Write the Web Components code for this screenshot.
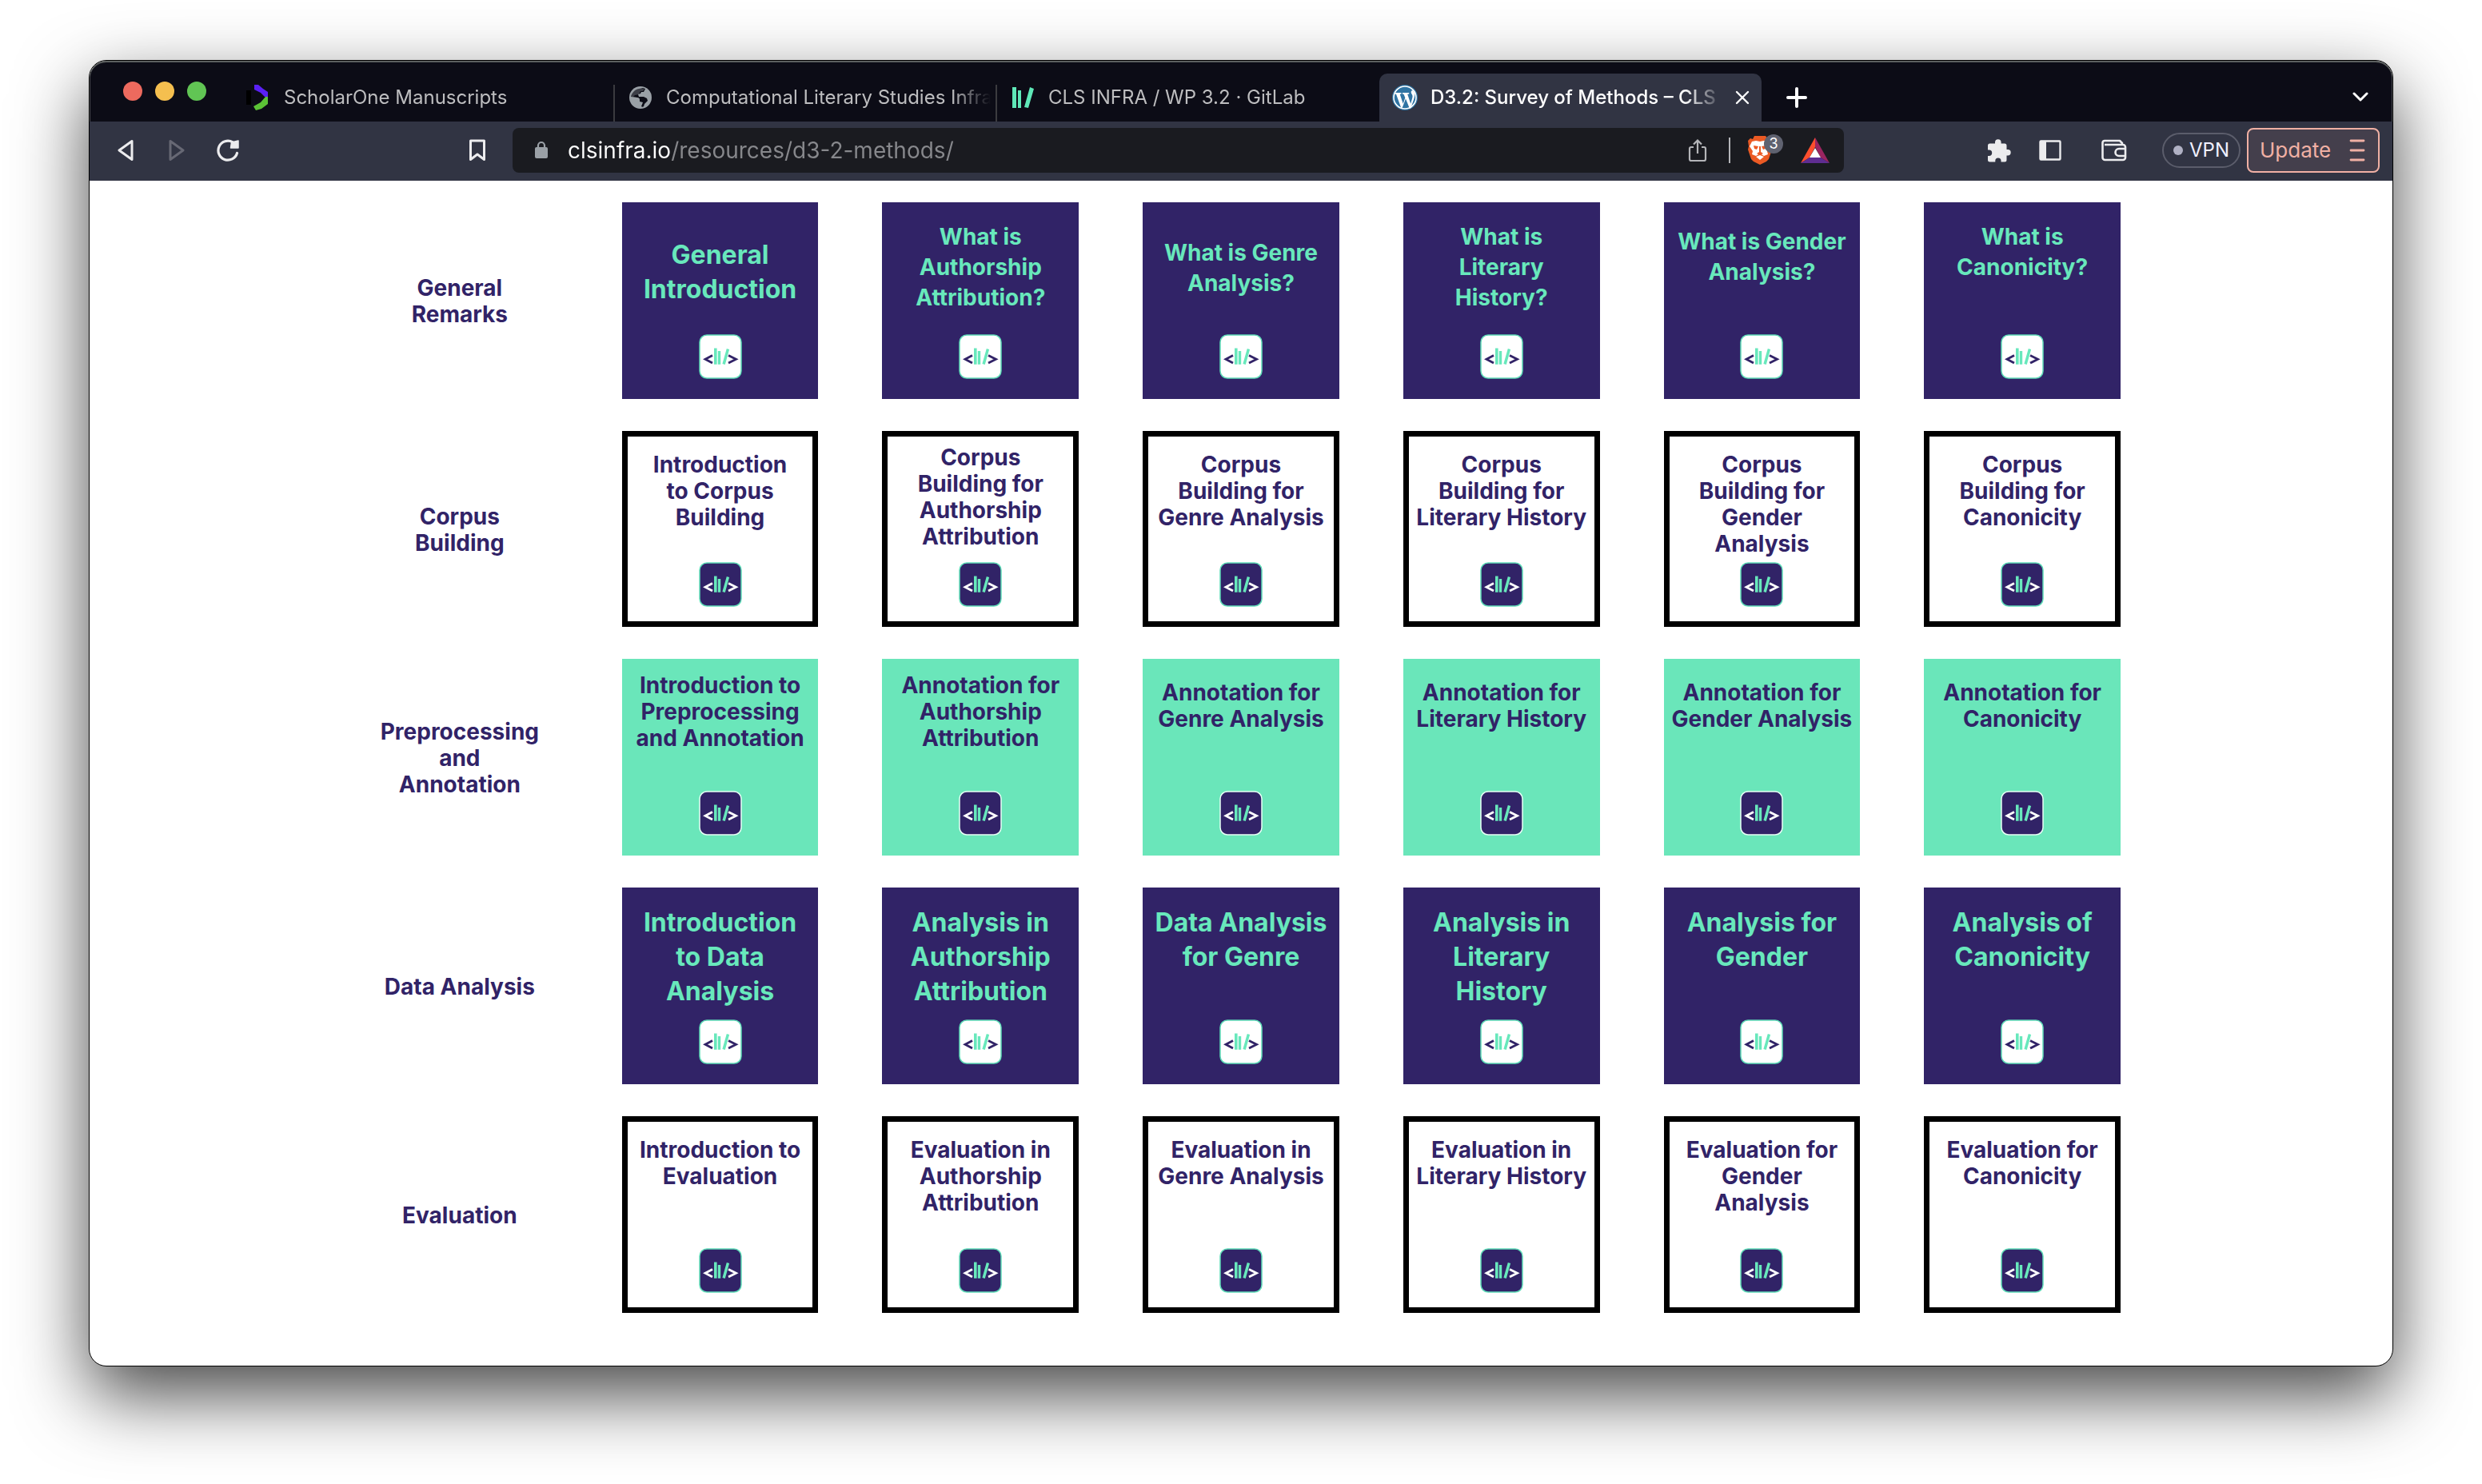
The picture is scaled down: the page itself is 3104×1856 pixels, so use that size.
<!DOCTYPE html>
<html lang="en">
<head>
<meta charset="utf-8">
<title>D3.2: Survey of Methods – CLS INFRA</title>
<style>
  html, body { margin: 0; background: #fff; }
  body { font-family: Inter, "Liberation Sans", sans-serif; min-height: 100vh; display: flex; }
</style>
</head>
<body>
<browser-window>
  <tab-strip slot="tabs">
    <browser-tab icon="scholar" divided>ScholarOne Manuscripts</browser-tab>
    <browser-tab icon="globe" divided>Computational Literary Studies Infra</browser-tab>
    <browser-tab icon="gitlab">CLS INFRA / WP 3.2 · GitLab</browser-tab>
    <browser-tab icon="wordpress" active>D3.2: Survey of Methods – CLS</browser-tab>
  </tab-strip>
  <nav-bar slot="toolbar"></nav-bar>
  <survey-grid></survey-grid>
</browser-window>

<script>
const ICONS = {
  scholar: [32, 32, '<path d="M1 7h6v18H1z" fill="#000"/><path d="M11 0h5l6 5 6 4v7l-4-1-5-5-8-4z" fill="#5a20f5"/><path d="M28 15v9l-8 6-7 2-3-5 9-5 6-7z" fill="#5bc236"/>'],
  globe: [32, 32, '<circle cx="16" cy="16" r="14" fill="#9aa0a6"/><path d="M14 5c-5 1-9 5-10 10l8 1c2 0 3 1 3 3v2l4 1-2 5c1 1 2 1 3 0l1-3 4-4-1-3-4-2h-6l-1-3 3-1 1-2h3l2-4-3-1z" fill="#0c0c16"/><path d="M15 4l6 1-2 3h-3l-2 4-5 1-2 2 5 1 3 2-1 3-5-1-5-5 1-6z" fill="#9aa0a6" opacity=".35"/>'],
  gitlab: [32, 32, '<path d="M3 3h5v26H3zM10 7h4v22h-4zM25 3l5 2-7 24-5-1z" fill="#5fe8b8"/>'],
  wordpress: [32, 32, '<circle cx="16" cy="16" r="16" fill="#2f74a3"/><circle cx="16" cy="16" r="14" fill="none" stroke="#fff" stroke-width="1.6"/><path d="M3.5 10h8v1.4l-1.8.3 4 12 2.6-7.4-1.8-4.6-1.6-.3V10h8.300v1.400l-2 .3 4 12 2-7c.9-3-.1-4-1-5.700-.9-1.500-.7-3.700 1.300-3.900l2.700 3c.5 3-.2 5.500-1 8l-4 11.400h-1.400L17 17.400l-4.300 11.300h-1.500L5 11.700l-1.500-.3z" fill="#fff"/>'],
  close: [18, 18, '<path d="M2 2l14 14M16 2L2 16" stroke="#fff" stroke-width="2.4" stroke-linecap="round"/>'],
  plus: [26, 26, '<path d="M13 2v22M2 13h22" stroke="#fff" stroke-width="4" stroke-linecap="round"/>'],
  chevron: [20, 14, '<path d="M2 2l8 8 8-8" fill="none" stroke="#fff" stroke-width="3" stroke-linecap="round" stroke-linejoin="round"/>'],
  back: [20, 28, '<path d="M18 2.500v23L2 14z" fill="none" stroke="#ececee" stroke-width="3" stroke-linejoin="round"/>'],
  forward: [20, 28, '<path d="M2 2.500v23L18 14z" fill="none" stroke="#676874" stroke-width="3" stroke-linejoin="round"/>'],
  reload: [30, 30, '<path d="M26.500 18.500A12 12 0 1 1 21 4.800" fill="none" stroke="#ececee" stroke-width="3.200" stroke-linecap="round"/><path d="M28 3v9h-9.500l1-7z" fill="#ececee" stroke="#ececee" stroke-width="1.500" stroke-linejoin="round"/>'],
  bookmark: [22, 28, '<path d="M2.500 2h17v23.500L11 19l-8.500 6.500z" fill="none" stroke="#ececee" stroke-width="3" stroke-linejoin="round"/>'],
  lock: [18, 24, '<rect x="1" y="8" width="16" height="14" rx="2" fill="#9aa0a6"/><path d="M5 9V6a4 4 0 0 1 8 0v3" fill="none" stroke="#9aa0a6" stroke-width="2.200"/>'],
  share: [24, 30, '<path d="M7 11H4a2 2 0 0 0-2 2v13a2 2 0 0 0 2 2h16a2 2 0 0 0 2-2V13a2 2 0 0 0-2-2h-3M12 19V3M7 7.500l5-5 5 5" fill="none" stroke="#b4b5b9" stroke-width="2.200"/>'],
  brave: [30, 36, '<path d="M8 0h14l3 4 4-1 1 6-1 4 1 4-4 12-3 3-8 4-8-4-3-3L0 17l1-4L0 6l3-3 3 1z" fill="#eb5a24"/><path d="M5 7l5-1 5 1 5-1 5 1 3 6-4 6 1 4-5 2-5-3-5 3-5-2 1-4-4-6z" fill="#fff"/><path d="M7 12l6 1-2 4-3-1zM23 12l-6 1 2 4 3-1zM14 13h2v7l3 2-4 2-4-2 3-2z" fill="#eb5a24"/><path d="M10 26l5-2 5 2-5 4z" fill="#fff"/>'],
  bat: [36, 32, '<path d="M18 0v12l-7 13L0 32z" fill="#ff4f2e"/><path d="M18 0l18 32-11-7-7-13z" fill="#9b2560"/><path d="M0 32l11-7h14l11 7z" fill="#5f2d91"/><path d="M18 13l7 12H11z" fill="#fff"/>'],
  puzzle: [30, 30, '<path d="M10 5a3.800 3.800 0 0 1 7.600 0v1.500H22a2.500 2.500 0 0 1 2.500 2.500v5H26a3.700 3.700 0 0 1 0 7.400h-1.500V27a2.500 2.500 0 0 1-2.500 2.500h-4.500V28a3.600 3.600 0 0 0-7.200 0v1.500H3.500A2.500 2.500 0 0 1 1 27v-5h1.500a3.700 3.700 0 0 0 0-7.400H1V9a2.500 2.500 0 0 1 2.500-2.500H10z" fill="#ececee"/>'],
  sidebar: [28, 26, '<rect x="1.500" y="1.500" width="25" height="23" rx="1" fill="none" stroke="#ececee" stroke-width="2.400"/><path d="M1 1h8v24H1z" fill="#ececee"/>'],
  wallet: [32, 28, '<path d="M26 7V5l-3-3H4a2.500 2.500 0 0 0-2.500 2.500V23A3 3 0 0 0 4.500 26h22.500a3 3 0 0 0 3-3V10a3 3 0 0 0-3-3H4" fill="none" stroke="#ececee" stroke-width="2.600" stroke-linejoin="round"/><path d="M30 12h-8a4.500 4.500 0 0 0 0 9h8" fill="none" stroke="#ececee" stroke-width="2.600"/>'],
  menu: [20, 28, '<path d="M2 2h16M2 14h16M2 26h16" stroke="#f0b0a4" stroke-width="2.800" stroke-linecap="round"/>'],
  cls: [54, 56, '<rect x="1" y="1" width="52" height="54" rx="9" fill="var(--face)" stroke="var(--rim)" stroke-width="1.500"/><path d="M17 26.500l-9 4.800 9 4.800M37 26.500l9.500 4.800-9.500 4.800" fill="none" stroke="var(--mark)" stroke-width="2.800"/><path d="M19 17.500h3.600v20.300H19zM23.800 21h3.400v16.800h-3.400zM34.800 18l3.300 1-5.300 19-3.400-.9z" fill="#68e8bc"/>']
};

function define(name, html, setup) {
  const template = document.createElement('template');
  template.innerHTML = html;
  customElements.define(name, class extends HTMLElement {
    connectedCallback() {
      if (this.shadowRoot) return;
      this.attachShadow({ mode: 'open' }).append(template.content.cloneNode(true));
      if (setup) setup.call(this, this.shadowRoot);
    }
  });
}

define('ui-icon', '<style>:host{display:block;flex:none}svg{display:block}</style>', function (root) {
  const [w, h, body] = ICONS[this.getAttribute('name')];
  root.innerHTML += `<svg width="${w}" height="${h}" viewBox="0 0 ${w} ${h}" aria-hidden="true">${body}</svg>`;
});

define('browser-window', `
<style>
  :host { flex: 1; display: flex; padding: 75px 111px 147px; }
  .frame { flex: 1; display: flex; flex-direction: column; overflow: hidden; background: #fff;
    border: 1px solid #000; border-radius: 22px; box-shadow: 0 36px 90px rgba(0,0,0,.72); }
  main { flex: 1; }
</style>
<div class="frame">
  <slot name="tabs"></slot>
  <slot name="toolbar"></slot>
  <main><slot></slot></main>
</div>`);

define('tab-strip', `
<style>
  :host { display: flex; align-items: center; height: 76px; box-sizing: border-box; padding: 0 30px 0 42px;
    background: #0c0c16; border-radius: 21px 21px 0 0; box-shadow: inset 0 2px #5c605f, inset 1px 0 #4a4c50, inset -1px 0 #4a4c50; }
  .lights { display: flex; gap: 16px; margin-right: 33px; }
  .lights button { width: 24px; height: 24px; border: 0; border-radius: 50%; padding: 0; }
  .red { background: #ed6a5e; } .amber { background: #f5bf4f; } .green { background: #61c554; }
  .tabs { display: flex; align-self: stretch; align-items: flex-end; flex: 0 1 1912px; min-width: 0; }
  .plain { background: none; border: 0; padding: 0; margin-top: 16px; display: grid; place-items: center; width: 40px; height: 40px; }
  .new { margin-left: 24px; }
  .list { margin-left: auto; width: 20px; }
</style>
<div class="lights"><button class="red" aria-label="Close window"></button><button class="amber" aria-label="Minimise"></button><button class="green" aria-label="Zoom"></button></div>
<div class="tabs" role="tablist"><slot></slot></div>
<button class="plain new" aria-label="New tab"><ui-icon name="plus"></ui-icon></button>
<button class="plain list" aria-label="Search tabs"><ui-icon name="chevron"></ui-icon></button>`);

define('browser-tab', `
<style>
  :host { flex: 1 1 0; min-width: 0; height: 60px; box-sizing: border-box; display: flex; align-items: center; padding: 0 8px 0 16px; color: #bdbdbf; }
  :host([divided]) { background: linear-gradient(#3b3b3f, #3b3b3f) right bottom / 2px 46px no-repeat; }
  :host([active]) { background: #313443; border-radius: 10px 10px 0 0; color: #fff; }
  .tab { flex: 1; min-width: 0; display: flex; align-items: center; gap: 16px; border: 0; padding: 0; background: none; font: inherit; color: inherit; text-align: left; }
  .label { flex: 1; min-width: 0; overflow: hidden; white-space: nowrap; font-size: 24px; line-height: 32px;
    -webkit-mask-image: linear-gradient(90deg, #000 calc(100% - 48px), transparent); mask-image: linear-gradient(90deg, #000 calc(100% - 48px), transparent); }
  :host([active]) .label { font-weight: 500; }
  .close { display: none; width: 32px; height: 32px; margin-left: 8px; border: 0; padding: 0; background: none; place-items: center; }
  :host([active]) .close { display: grid; }
</style>
<button class="tab" role="tab"><span class="icon"></span><span class="label"><slot></slot></span></button>
<button class="close" aria-label="Close tab"><ui-icon name="close"></ui-icon></button>`, function (root) {
  root.querySelector('.icon').innerHTML = `<ui-icon name="${this.getAttribute('icon')}"></ui-icon>`;
  root.querySelector('.tab').setAttribute('aria-selected', this.hasAttribute('active'));
});

define('nav-bar', `
<style>
  :host { display: flex; align-items: center; height: 74px; box-sizing: border-box; padding: 0 16px 2px 13px; background: #313443; }
  button { font: inherit; }
  .tool { width: 64px; height: 56px; border: 0; padding: 0; background: none; display: grid; place-items: center; flex: none; }
  .mark { margin: 0 12px 0 248px; }
  .url { flex: 1; min-width: 0; height: 56px; box-sizing: border-box; display: flex; align-items: center; padding: 0 18px 0 27px; background: #1a1b20; border-radius: 8px; }
  .url input { flex: 1; min-width: 0; margin: 0 0 0 24px; padding: 0; border: 0; outline: 0; height: 40px; font: 28px/40px Inter, "Liberation Sans", sans-serif; color: #fff;
    background: linear-gradient(90deg, #fff 128px, #87888c 128px); -webkit-background-clip: text; background-clip: text; -webkit-text-fill-color: transparent; }
  .url button { border: 0; padding: 0; background: none; display: block; }
  .rule { width: 2px; height: 32px; background: #b4b5b9; margin: 0 22px 0 27px; }
  .shield { position: relative; margin-right: 36px; }
  .badge { position: absolute; left: 20px; top: -2px; width: 24px; height: 24px; border-radius: 12px; background: #5f6270; color: #fff; font-size: 18px; line-height: 24px; text-align: center; }
  .ext { margin-left: 162px; }
  .wallet { margin: 0 28px 0 16px; }
  .vpn { height: 44px; box-sizing: border-box; width: 98px; border: 2px solid #5b5d6b; border-radius: 22px; background: none; color: #f0f0ff; font-size: 24px; line-height: 32px; padding: 0 0 0 12px; display: flex; align-items: center; gap: 8px; margin-right: 8px; }
  .vpn i { width: 12px; height: 12px; border-radius: 50%; background: #b0b1c4; }
  .update { height: 56px; width: 166px; box-sizing: border-box; border: 2px solid #f0b0a4; border-radius: 8px; background: #443f4c; color: #f0b0a4; font-size: 26px; line-height: 32px; padding: 0 16px 0 14px; display: flex; align-items: center; justify-content: space-between; }
</style>
<button class="tool" aria-label="Back"><ui-icon name="back"></ui-icon></button>
<button class="tool" aria-label="Forward"><ui-icon name="forward"></ui-icon></button>
<button class="tool" aria-label="Reload"><ui-icon name="reload"></ui-icon></button>
<button class="tool mark" aria-label="Bookmark"><ui-icon name="bookmark"></ui-icon></button>
<div class="url">
  <ui-icon name="lock"></ui-icon>
  <input type="text" aria-label="Address" value="clsinfra.io/resources/d3-2-methods/">
  <button aria-label="Share"><ui-icon name="share"></ui-icon></button>
  <span class="rule"></span>
  <button class="shield" aria-label="Shields"><ui-icon name="brave"></ui-icon><span class="badge">3</span></button>
  <button aria-label="Rewards"><ui-icon name="bat"></ui-icon></button>
</div>
<button class="tool ext" aria-label="Extensions"><ui-icon name="puzzle"></ui-icon></button>
<button class="tool" aria-label="Sidebar"><ui-icon name="sidebar"></ui-icon></button>
<button class="tool wallet" aria-label="Wallet"><ui-icon name="wallet"></ui-icon></button>
<button class="vpn"><i></i>VPN</button>
<button class="update">Update<ui-icon name="menu"></ui-icon></button>`);

define('row-label', `
<style>
  :host { display: grid; place-items: center; padding-top: 3px; text-align: center; color: #312367; font-weight: 700; font-size: 28px; line-height: 33px; white-space: nowrap; }
</style>
<div><slot></slot></div>`);

define('topic-card', `
<style>
  :host { display: block; aspect-ratio: 1; --face: #312367; --mark: #fff; --rim: #5fdcb8; --ink: #312367; }
  a { display: flex; flex-direction: column; justify-content: space-between; align-items: center; height: 100%; box-sizing: border-box;
    padding: 26px 0 25px; text-align: center; text-decoration: none; white-space: nowrap; color: var(--ink); font-weight: 700; font-size: 28px; line-height: 33px; }
  :host([tone=dark]) { --face: #fff; --mark: #312367; --ink: #68e8bc; }
  :host([tone=dark]) a { background: #312367; line-height: 38px; padding-top: 24px; }
  :host([tone=light]) a { background: #fff; box-shadow: inset 0 0 0 7px #000; }
  :host([tone=mint]) { --rim: #e8fff6; }
  :host([tone=mint]) a { background: #6ae6ba; }
  :host([big]) a { font-size: 32px; line-height: 43px; padding-top: 22px; }
  :host([start=high]) a { padding-top: 17px; }
  :host([start=mid]) a { padding-top: 30px; }
  :host([start=low]) a { padding-top: 44px; }
</style>
<a href="#"><span><slot></slot></span><ui-icon name="cls"></ui-icon></a>`);

const ROWS = [
  ['General|Remarks', 'dark', ['General|Introduction;big;low', 'What is|Authorship|Attribution?', 'What is Genre|Analysis?;;low', 'What is|Literary|History?', 'What is Gender|Analysis?;;mid', 'What is|Canonicity?']],
  ['Corpus|Building', 'light', ['Introduction|to Corpus|Building', 'Corpus|Building for|Authorship|Attribution;;high', 'Corpus|Building for|Genre Analysis', 'Corpus|Building for|Literary History', 'Corpus|Building for|Gender|Analysis', 'Corpus|Building for|Canonicity']],
  ['Preprocessing|and|Annotation', 'mint', ['Introduction to|Preprocessing|and Annotation;;high', 'Annotation for|Authorship|Attribution;;high', 'Annotation for|Genre Analysis', 'Annotation for|Literary History', 'Annotation for|Gender Analysis', 'Annotation for|Canonicity']],
  ['Data Analysis', 'dark', ['Introduction|to Data|Analysis;big', 'Analysis in|Authorship|Attribution;big', 'Data Analysis|for Genre;big', 'Analysis in|Literary|History;big', 'Analysis for|Gender;big', 'Analysis of|Canonicity;big']],
  ['Evaluation', 'light', ['Introduction to|Evaluation', 'Evaluation in|Authorship|Attribution', 'Evaluation in|Genre Analysis', 'Evaluation in|Literary History', 'Evaluation for|Gender|Analysis', 'Evaluation for|Canonicity']]
];
const lines = text => text.split('|').join('<br>');

define('survey-grid', `
<style>
  :host { display: block; padding: 27px 40px; }
  .grid { display: grid; grid-template-columns: repeat(7, minmax(0, 1fr)); gap: 40px 80px; max-width: 2200px; margin: 0 auto; }
</style>
<div class="grid"></div>`, function (root) {
  root.querySelector('.grid').innerHTML = ROWS.map(([label, tone, cards]) =>
    `<row-label>${lines(label)}</row-label>` + cards.map(card => {
      const [text, big, start] = card.split(';');
      return `<topic-card tone="${tone}" ${big || ''} ${start ? `start="${start}"` : ''}>${lines(text)}</topic-card>`;
    }).join('')).join('');
});
</script>
</body>
</html>
